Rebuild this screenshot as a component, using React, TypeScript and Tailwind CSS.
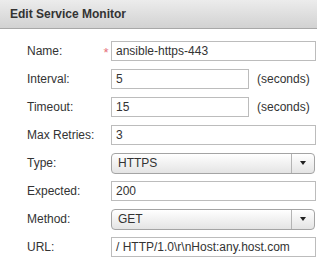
import React from "react";

function Label({ children }: { children: React.ReactNode }) {
  return <span className="w-[74px] shrink-0 text-[12px] text-[#333]">{children}</span>;
}

function Star({ show }: { show?: boolean }) {
  return (
    <span className="w-[10px] shrink-0 h-[20px] text-[13px] leading-[24px] text-[#e5707a] flex justify-center">
      {show ? "*" : ""}
    </span>
  );
}

function Input({ value, wide = true }: { value: string; wide?: boolean }) {
  return (
    <div
      className={`${wide ? "w-[205px]" : "w-[138px]"} h-[20px] border border-[#bcbcbc] bg-white flex items-center pl-[4px] text-[12px] text-[#333] whitespace-nowrap overflow-hidden`}
    >
      {value}
    </div>
  );
}

function Select({ value }: { value: string }) {
  return (
    <div className="w-[204px] h-[21px] rounded-[4px] border border-[#a4a4a4] bg-gradient-to-b from-[#ffffff] to-[#e4e4e4] flex items-stretch text-[12px] text-[#333]">
      <div className="flex-1 flex items-center pl-[6px]">{value}</div>
      <div className="w-[23px] border-l border-[#b4b4b4] flex items-center justify-center">
        <svg width="6" height="4" viewBox="0 0 6 4">
          <polygon points="0,0 6,0 3,4" fill="#222" />
        </svg>
      </div>
    </div>
  );
}

function Row({ children }: { children: React.ReactNode }) {
  return <div className="flex items-center h-[20px] pl-[27px]">{children}</div>;
}

export default function App() {
  return (
    <div
      className="w-[317px] h-[262px] bg-white overflow-hidden"
      style={{ fontFamily: '"Liberation Sans", Arial, sans-serif' }}
    >
      <div className="h-[29px] flex items-center pl-[10px] bg-gradient-to-b from-[#ececec] to-[#d2d2d2] border-b border-[#a8a8a8]">
        <span className="text-[12px] font-bold text-[#333]">Edit Service Monitor</span>
      </div>
      <div className="pt-[12px] flex flex-col gap-[8px]">
        <Row>
          <Label>Name:</Label>
          <Star show />
          <Input value="ansible-https-443" />
        </Row>
        <Row>
          <Label>Interval:</Label>
          <Star />
          <Input value="5" wide={false} />
          <span className="ml-[8px] text-[12px] text-[#333]">(seconds)</span>
        </Row>
        <Row>
          <Label>Timeout:</Label>
          <Star />
          <Input value="15" wide={false} />
          <span className="ml-[8px] text-[12px] text-[#333]">(seconds)</span>
        </Row>
        <Row>
          <Label>Max Retries:</Label>
          <Star />
          <Input value="3" />
        </Row>
        <Row>
          <Label>Type:</Label>
          <Star />
          <Select value="HTTPS" />
        </Row>
        <Row>
          <Label>Expected:</Label>
          <Star />
          <Input value="200" />
        </Row>
        <Row>
          <Label>Method:</Label>
          <Star />
          <Select value="GET" />
        </Row>
        <Row>
          <Label>URL:</Label>
          <Star />
          <Input value="/ HTTP/1.0\r\nHost:any.host.com" />
        </Row>
      </div>
    </div>
  );
}
